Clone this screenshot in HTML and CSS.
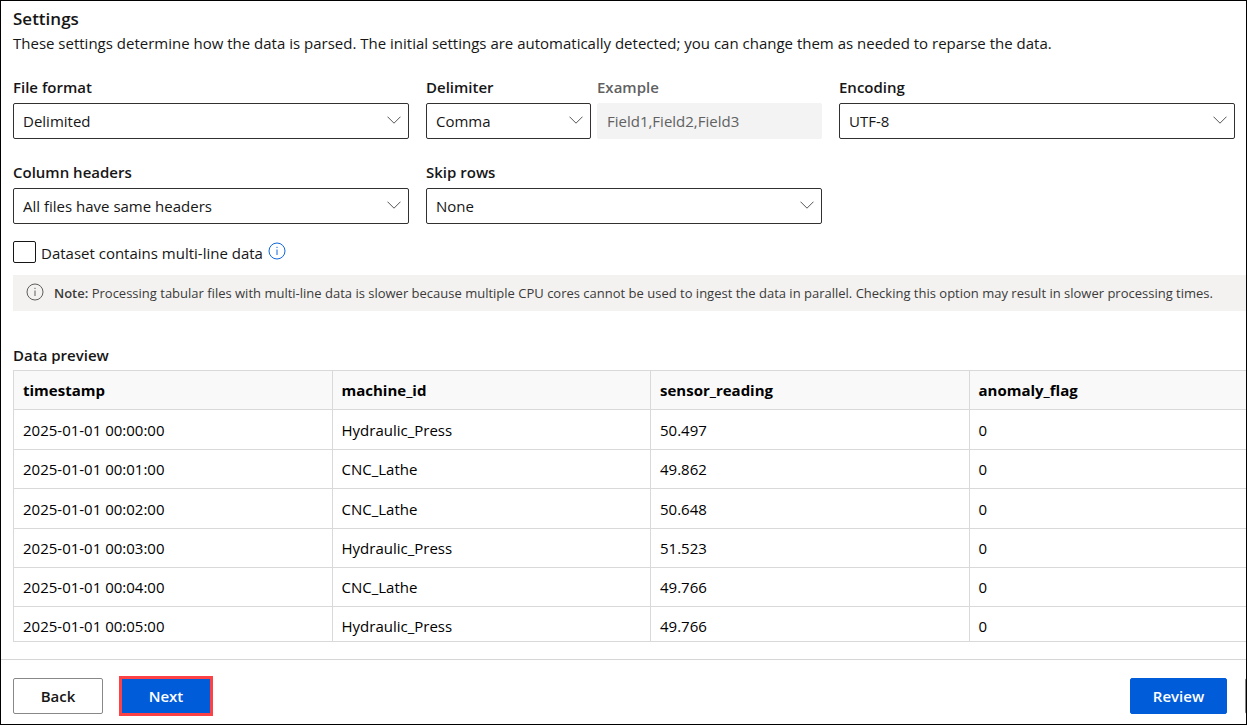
FILE: index.html
```html
<!DOCTYPE html>
<html lang="en">
<head>
<meta charset="utf-8">
<title>Settings</title>
<link rel="stylesheet" href="styles.css">
</head>
<body>
<div class="page">
  <main class="content">
    <h1 class="title">Settings</h1>
    <p class="intro">These settings determine how the data is parsed. The initial settings are automatically detected; you can change them as needed to reparse the data.</p>

    <form class="fields">
      <div class="field">
        <label class="label" for="format">File format</label>
        <div class="select">
          <select class="control" id="format"><option>Delimited</option></select>
          <svg class="chevron" viewBox="0 0 14 8"><path d="M0.5 0.7L7 7.2L13.500 0.7"/></svg>
        </div>
      </div>
      <div class="pair">
        <div class="field">
          <label class="label" for="delimiter">Delimiter</label>
          <div class="select">
            <select class="control" id="delimiter"><option>Comma</option></select>
            <svg class="chevron" viewBox="0 0 14 8"><path d="M0.5 0.7L7 7.2L13.500 0.7"/></svg>
          </div>
        </div>
        <div class="field">
          <label class="label label-disabled" for="example">Example</label>
          <input class="control control-disabled" id="example" type="text" value="Field1,Field2,Field3" disabled>
        </div>
      </div>
      <div class="field">
        <label class="label" for="encoding">Encoding</label>
        <div class="select">
          <select class="control" id="encoding"><option>UTF-8</option></select>
          <svg class="chevron" viewBox="0 0 14 8"><path d="M0.5 0.7L7 7.2L13.500 0.7"/></svg>
        </div>
      </div>
      <div class="field">
        <label class="label" for="headers">Column headers</label>
        <div class="select">
          <select class="control" id="headers"><option>All files have same headers</option></select>
          <svg class="chevron" viewBox="0 0 14 8"><path d="M0.5 0.7L7 7.2L13.500 0.7"/></svg>
        </div>
      </div>
      <div class="field">
        <label class="label" for="skip">Skip rows</label>
        <div class="select">
          <select class="control" id="skip"><option>None</option></select>
          <svg class="chevron" viewBox="0 0 14 8"><path d="M0.5 0.7L7 7.2L13.500 0.7"/></svg>
        </div>
      </div>
    </form>

    <div class="multiline">
      <input class="checkbox" type="checkbox" id="multiline">
      <label class="multiline-label" for="multiline">Dataset contains multi-line data</label>
      <svg class="info info-link" viewBox="0 0 18 18"><circle cx="9" cy="9" r="8"/><path d="M9 7.500V13M9 4.800V6"/></svg>
    </div>

    <div class="note">
      <svg class="info info-note" viewBox="0 0 18 18"><circle cx="9" cy="9" r="8"/><path d="M9 7.500V13M9 4.800V6"/></svg>
      <p class="note-text"><b>Note:</b> Processing tabular files with multi-line data is slower because multiple CPU cores cannot be used to ingest the data in parallel. Checking this option may result in slower processing times.</p>
    </div>

    <h2 class="subtitle">Data preview</h2>
    <div class="preview">
      <table class="table">
        <thead>
          <tr><th>timestamp</th><th>machine_id</th><th>sensor_reading</th><th>anomaly_flag</th></tr>
        </thead>
        <tbody>
          <tr><td>2025-01-01 00:00:00</td><td>Hydraulic_Press</td><td>50.497</td><td>0</td></tr>
          <tr><td>2025-01-01 00:01:00</td><td>CNC_Lathe</td><td>49.862</td><td>0</td></tr>
          <tr><td>2025-01-01 00:02:00</td><td>CNC_Lathe</td><td>50.648</td><td>0</td></tr>
          <tr><td>2025-01-01 00:03:00</td><td>Hydraulic_Press</td><td>51.523</td><td>0</td></tr>
          <tr><td>2025-01-01 00:04:00</td><td>CNC_Lathe</td><td>49.766</td><td>0</td></tr>
          <tr><td>2025-01-01 00:05:00</td><td>Hydraulic_Press</td><td>49.766</td><td>0</td></tr>
        </tbody>
      </table>
    </div>
  </main>

  <footer class="footer">
    <button class="button" type="button">Back</button>
    <button class="button button-primary button-marked" type="button">Next</button>
    <div class="footer-end">
      <button class="button button-primary button-review" type="button">Review</button>
      <button class="button" type="button"></button>
    </div>
  </footer>
</div>
</body>
</html>
```
FILE: styles.css
```css
* {
  box-sizing: border-box;
}

body {
  margin: 0;
  background: #fff;
  color: #161616;
  font-family: "Open Sans", "Noto Sans", sans-serif;
  font-size: 15px;
  line-height: 20px;
}

.page {
  display: flex;
  flex-direction: column;
  height: 100vh;
  border: 1px solid #000;
  overflow: hidden;
}

.content {
  display: flex;
  flex: 1;
  flex-direction: column;
  min-height: 0;
  padding: 6px 0 17px 12px;
}

.title,
.subtitle,
.intro,
.note-text {
  margin: 0;
}

.title {
  font-size: 17px;
  font-weight: 600;
  line-height: 24px;
}

.intro {
  line-height: 24px;
}

.fields {
  display: grid;
  grid-template-columns: repeat(3, 1fr);
  gap: 23px 17px;
  margin-right: 11px;
  padding-top: 22px;
}

.pair {
  display: grid;
  grid-template-columns: 11fr 15fr;
  gap: 6px;
}

.field {
  min-width: 0;
}

.label {
  display: block;
  height: 26px;
  font-weight: 600;
}

.label-disabled {
  color: #616161;
}

.select {
  position: relative;
}

.control {
  display: block;
  width: 100%;
  height: 36px;
  padding: 0 9px;
  border: 1px solid #323130;
  border-radius: 2px;
  background: #fff;
  color: inherit;
  font: inherit;
  appearance: none;
}

.control-disabled {
  border-color: #f3f3f3;
  background: #f3f3f3;
  color: #616161;
}

.chevron {
  position: absolute;
  top: 13px;
  right: 8px;
  width: 14px;
  height: 8px;
  fill: none;
  stroke: #555;
  pointer-events: none;
}

.multiline {
  display: flex;
  align-items: center;
  gap: 5px;
  margin-top: 17px;
}

.checkbox {
  width: 23px;
  height: 22px;
  margin: 0;
  border: 1px solid #161616;
  border-radius: 2px;
  background: #fff;
  appearance: none;
}

.multiline-label {
  padding-top: 2px;
}

.info {
  flex: none;
  width: 18px;
  height: 18px;
  fill: none;
  stroke: #605e5c;
}

.info-link {
  margin-bottom: 3px;
  stroke: #1067db;
}

.info-note {
  margin-bottom: 2px;
}

.note {
  display: flex;
  align-items: center;
  gap: 10px;
  min-height: 36px;
  margin-top: 12px;
  padding-left: 13px;
  background: #f3f2f1;
  color: #3b3a39;
  font-size: 13px;
  white-space: nowrap;
}

.note b {
  font-weight: 600;
}

.subtitle {
  padding: 34px 0 5px;
  font-size: 15px;
  font-weight: 600;
}

.preview {
  flex: 1;
  min-height: 0;
  border: solid #d9d9d9;
  border-width: 1px 0 1px 1px;
  overflow: hidden;
}

.table {
  width: calc(100% + 42px);
  border-spacing: 0;
  table-layout: fixed;
  color: #000;
}

.table th,
.table td {
  height: 39px;
  padding: 0 9px;
  border: solid #d9d9d9;
  border-width: 0 1px 1px 0;
  text-align: left;
}

.table th {
  background: #f9f9f9;
  font-weight: 700;
}

.table tbody tr:nth-child(-2n + 3) td {
  height: 40px;
}

.footer {
  display: flex;
  align-items: center;
  gap: 18px;
  padding: 18px 0 10px 12px;
  border-top: 1px solid #d6d6d6;
}

.button {
  flex: none;
  width: 90px;
  height: 36px;
  padding: 0;
  border: 1px solid #8a8886;
  border-radius: 2px;
  background: #fff;
  color: #161616;
  font: inherit;
  font-weight: 600;
}

.button-primary {
  border-color: #015cda;
  background: #015cda;
  color: #fff;
}

.button-marked {
  border-radius: 0;
  outline: 3px solid #fd4245;
  outline-offset: -1px;
}

.button-review {
  width: 97px;
}

/* The last action runs past the right edge of the panel. */
.footer-end {
  display: flex;
  gap: 18px;
  margin-right: -89px;
  margin-left: auto;
}
```
